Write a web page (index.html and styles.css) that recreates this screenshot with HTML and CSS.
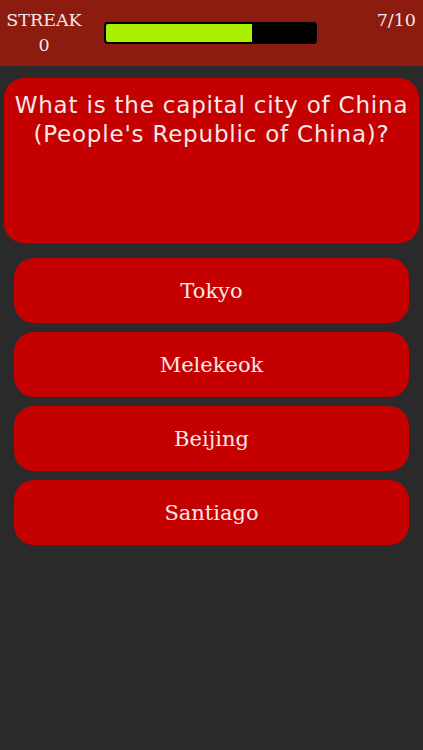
FILE: index.html
```html
<!DOCTYPE html>
<html>
<head>
<meta charset="utf-8">
<link rel="stylesheet" href="styles.css">
</head>
<body>
<div class="app">
  <header class="topbar">
    <div class="streak">
      <div>STREAK</div>
      <div>0</div>
    </div>
    <div class="progress"><div class="fill" style="width:70%"></div></div>
    <div class="count">7/10</div>
  </header>
  <main class="content">
    <div class="question">What is the capital city of China (People's Republic of China)?</div>
    <div class="answers">
      <div class="answer">Tokyo</div>
      <div class="answer">Melekeok</div>
      <div class="answer">Beijing</div>
      <div class="answer">Santiago</div>
    </div>
  </main>
</div>
</body>
</html>
```

FILE: styles.css
```css
html, body {
  margin: 0;
  padding: 0;
  background: #2a2a2a;
}
.app {
  width: 423px;
  height: 750px;
  background: #2a2a2a;
  color: #f6e8e8;
}
.topbar {
  height: 66px;
  background: #8c1c10;
  display: flex;
  align-items: flex-start;
  box-sizing: border-box;
  padding: 8px 7px 0 6px;
  font-family: "DejaVu Serif", serif;
  font-size: 17.5px;
}
.streak {
  width: 76px;
  text-align: center;
  line-height: 25px;
}
.progress {
  margin: 14px 0 0 22px;
  width: 213px;
  height: 22px;
  box-sizing: border-box;
  border: 2px solid #000;
  border-radius: 4px;
  background: #000;
  overflow: hidden;
}
.fill {
  height: 100%;
  background: #a8ef00;
}
.count {
  margin-left: auto;
  line-height: 24px;
}
.content {
  padding: 12px 4px 0;
}
.question {
  height: 165px;
  box-sizing: border-box;
  background: #c40000;
  border-radius: 20px;
  padding: 13px 2px;
  text-align: center;
  font-family: "DejaVu Sans", sans-serif;
  font-size: 23px;
  letter-spacing: 0.8px;
  line-height: 29px;
}
.answers {
  margin: 15px 10px 0;
  display: flex;
  flex-direction: column;
  gap: 9px;
}
.answer {
  height: 65px;
  background: #c40000;
  border-radius: 20px;
  display: flex;
  align-items: center;
  justify-content: center;
  font-family: "DejaVu Serif", serif;
  font-size: 21px;
}
```
